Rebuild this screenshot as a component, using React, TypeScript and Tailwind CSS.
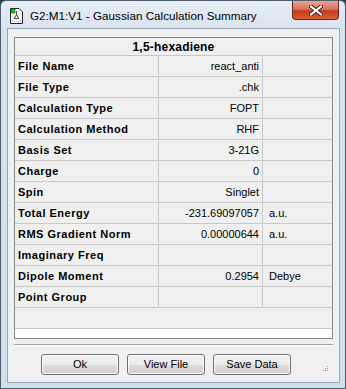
const rows: [string, string, string][] = [
  ["File Name", "react_anti", ""],
  ["File Type", ".chk", ""],
  ["Calculation Type", "FOPT", ""],
  ["Calculation Method", "RHF", ""],
  ["Basis Set", "3-21G", ""],
  ["Charge", "0", ""],
  ["Spin", "Singlet", ""],
  ["Total Energy", "-231.69097057", "a.u."],
  ["RMS Gradient Norm", "0.00000644", "a.u."],
  ["Imaginary Freq", "", ""],
  ["Dipole Moment", "0.2954", "Debye"],
  ["Point Group", "", ""],
];

function AppIcon() {
  return (
    <svg width="13" height="16" viewBox="0 0 13 16">
      <path d="M0.5 0.5 H9 L12.5 4 V15.5 H0.5 Z" fill="#fff" stroke="#222" />
      <rect x="1" y="1" width="4" height="4" fill="#19c319" stroke="#0a5a0a" strokeWidth="0.6" />
      <path d="M6.5 3 V7 M6.5 7 L4 10.5 M6.5 7 L9 10.5 M4 10.5 H9" stroke="#555" strokeWidth="1.1" fill="none" />
      <path d="M2 12.5 h1 M4 13.5 h1 M8 13.5 h1 M10 12.5 h1" stroke="#999" strokeWidth="1" />
    </svg>
  );
}

function CloseButton() {
  return (
    <div className="absolute top-0 right-[6px] w-[47px] h-[19px] rounded-b-[4px] border border-[#6b2a1c] border-t-0 bg-[linear-gradient(#eba393_0%,#d9745b_45%,#c8381c_55%,#d9603a_100%)] flex items-center justify-center">
      <svg width="14" height="11" viewBox="0 0 14 11">
        <path d="M2 1.5 L12 9.5 M12 1.5 L2 9.5" stroke="#4a1810" strokeWidth="4" strokeLinecap="square" />
        <path d="M2 1.5 L12 9.5 M12 1.5 L2 9.5" stroke="#fff" strokeWidth="2.2" strokeLinecap="square" />
      </svg>
    </div>
  );
}

function Button({ label }: { label: string }) {
  return (
    <div className="w-[78px] h-[21px] rounded-[3px] border border-[#707070] bg-[linear-gradient(#f2f2f2_0%,#ebebeb_50%,#dddddd_51%,#cfcfcf_100%)] shadow-[inset_0_0_0_1px_#fcfcfc] flex items-center justify-center text-[11px] text-black">
      {label}
    </div>
  );
}

function SizeGrip() {
  return (
    <svg className="absolute right-[10px] bottom-[9px]" width="7" height="7" viewBox="0 0 7 7">
      {[
        [5, 0],
        [3, 2],
        [5, 2],
        [1, 4],
        [3, 4],
        [5, 4],
      ].map(([x, y], i) => (
        <rect key={i} x={x} y={y} width="1" height="1" fill="#a0a0a0" />
      ))}
    </svg>
  );
}

export default function App() {
  return (
    <div
      className="w-[346px] h-[389px] bg-[#2b4556]"
      style={{ fontFamily: '"Liberation Sans", Arial, sans-serif' }}
    >
      <div className="relative w-[346px] h-[389px] border border-[#4d5d6c] rounded-t-[6px] bg-[linear-gradient(#e6edf5,#d9e3ee_30px,#d3dee9)] pl-[6px] pr-[5px] pb-[5px] flex flex-col">
        <div className="h-[27px] flex items-center pl-[3px] gap-[7px] pt-[3px]">
          <AppIcon />
          <span className="text-[11.7px] text-black">G2:M1:V1 - Gaussian Calculation Summary</span>
        </div>
        <CloseButton />
        <div className="relative flex-1 border border-[#9aa7b5] bg-[#f0f0f0] px-[6px] pt-[8px] flex flex-col">
          <div className="h-[302px] border border-[#828790] bg-[#f0f0f0] flex flex-col">
            <div className="h-[18px] border-b border-[#c8c8c8] flex items-center justify-center font-bold text-[12px] text-black tracking-[0.2px]">
              1,5-hexadiene
            </div>
            {rows.map(([label, value, unit]) => (
              <div key={label} className="h-[21px] border-b border-[#c8c8c8] flex text-black">
                <div className="w-[144px] border-r border-[#c8c8c8] pl-[3px] flex items-center font-bold text-[11px] tracking-[0.5px]">
                  {label}
                </div>
                <div className="w-[104px] border-r border-[#c8c8c8] pr-[3px] flex items-center justify-end text-[11px]">
                  {value}
                </div>
                <div className="flex-1 pl-[6px] flex items-center text-[11px]">{unit}</div>
              </div>
            ))}
            <div className="h-[21px] border-b border-[#c8c8c8]" />
            <div className="flex-1 bg-white" />
          </div>
          <div className="mt-[5px] h-[2px] border-t border-[#a0a0a0] border-b border-b-white" />
          <div className="mt-[8px] flex gap-[8px] pl-[27px]">
            <Button label="Ok" />
            <Button label="View File" />
            <Button label="Save Data" />
          </div>
          <SizeGrip />
        </div>
      </div>
    </div>
  );
}
